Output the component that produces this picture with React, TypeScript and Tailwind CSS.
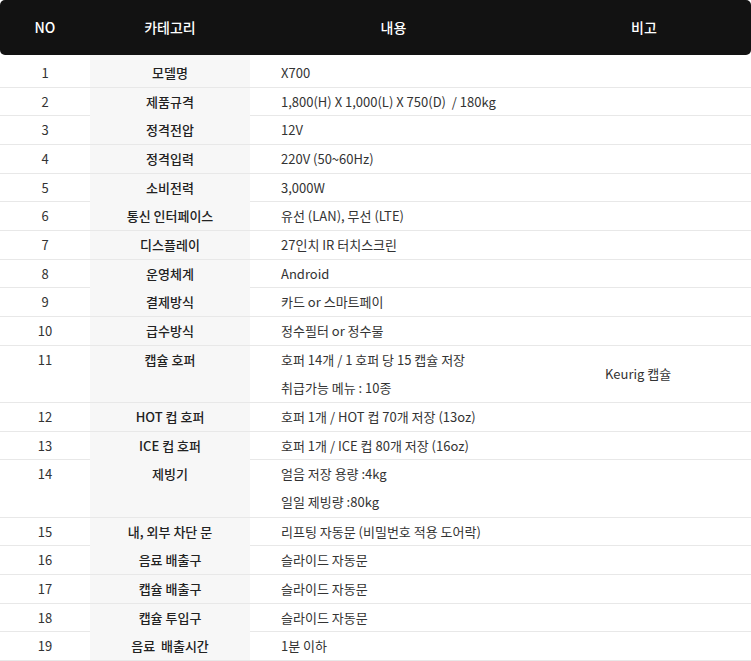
const rows: { no: string; cat: string; lines: string[]; note?: string }[] = [
  { no: "1", cat: "모델명", lines: ["X700"] },
  { no: "2", cat: "제품규격", lines: ["1,800(H) X 1,000(L) X 750(D)  / 180kg"] },
  { no: "3", cat: "정격전압", lines: ["12V"] },
  { no: "4", cat: "정격입력", lines: ["220V (50~60Hz)"] },
  { no: "5", cat: "소비전력", lines: ["3,000W"] },
  { no: "6", cat: "통신 인터페이스", lines: ["유선 (LAN), 무선 (LTE)"] },
  { no: "7", cat: "디스플레이", lines: ["27인치 IR 터치스크린"] },
  { no: "8", cat: "운영체계", lines: ["Android"] },
  { no: "9", cat: "결제방식", lines: ["카드 or 스마트페이"] },
  { no: "10", cat: "급수방식", lines: ["정수필터 or 정수물"] },
  { no: "11", cat: "캡슐 호퍼", lines: ["호퍼 14개 / 1 호퍼 당 15 캡슐 저장", "취급가능 메뉴 : 10종"], note: "Keurig 캡슐" },
  { no: "12", cat: "HOT 컵 호퍼", lines: ["호퍼 1개 / HOT 컵 70개 저장 (13oz)"] },
  { no: "13", cat: "ICE 컵 호퍼", lines: ["호퍼 1개 / ICE 컵 80개 저장 (16oz)"] },
  { no: "14", cat: "제빙기", lines: ["얼음 저장 용량 :4kg", "일일 제빙량 :80kg"] },
  { no: "15", cat: "내, 외부 차단 문", lines: ["리프팅 자동문 (비밀번호 적용 도어락)"] },
  { no: "16", cat: "음료 배출구", lines: ["슬라이드 자동문"] },
  { no: "17", cat: "캡슐 배출구", lines: ["슬라이드 자동문"] },
  { no: "18", cat: "캡슐 투입구", lines: ["슬라이드 자동문"] },
  { no: "19", cat: "음료  배출시간", lines: ["1분 이하"] },
];

export default function App() {
  return (
    <div className="w-[751px] h-[661px] overflow-hidden bg-white text-[13px] text-[#333] font-['Noto_Sans_CJK_KR','Noto_Sans',sans-serif]">
      {/* header */}
      <div className="grid grid-cols-[90px_160px_287px_1fr] h-[55px] items-center bg-[#121212] rounded-[5px] text-white text-[14px] font-medium">
        <div className="text-center">NO</div>
        <div className="text-center">카테고리</div>
        <div className="text-center">내용</div>
        <div className="text-center">비고</div>
      </div>

      {rows.map((r, i) => (
        <div
          key={r.no}
          className={`grid grid-cols-[90px_160px_287px_1fr] border-b border-[#e8e8e8] ${
            i === 0 ? "h-[32.67px]" : r.lines.length > 1 ? "h-[57.33px]" : "h-[28.67px]"
          }`}
        >
          <div className={`text-center ${i === 0 ? "pt-[4px]" : ""}`}>
            <div className="h-[28px] leading-[28px]">{r.no}</div>
          </div>
          <div className={`bg-[#f7f7f7] text-center font-medium text-[#222] ${i === 0 ? "pt-[4px]" : ""}`}>
            <div className="h-[28px] leading-[28px] whitespace-pre">{r.cat}</div>
          </div>
          <div className={`pl-[31px] ${i === 0 ? "pt-[4px]" : ""}`}>
            {r.lines.map((l, j) => (
              <div key={j} className="whitespace-pre h-[28px] leading-[28px]">
                {l}
              </div>
            ))}
          </div>
          <div className="flex items-center pl-[68px]">{r.note}</div>
        </div>
      ))}
    </div>
  );
}
